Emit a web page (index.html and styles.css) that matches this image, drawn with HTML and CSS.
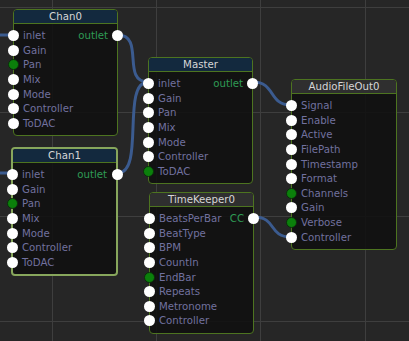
FILE: index.html
```html
<!DOCTYPE html>
<html lang="en">
<head>
    <meta charset="UTF-8">
    <title>Node Editor</title>
    <link rel="stylesheet" href="styles.css">
</head>
<body>

<div class="canvas">
    <!-- grid + links -->
    <svg class="wires" width="409" height="341" viewBox="0 0 409 341">
        <g class="grid">
            <line x1="52.5" y1="0" x2="52.5" y2="341"/>
            <line x1="156.5" y1="0" x2="156.5" y2="341"/>
            <line x1="260.5" y1="0" x2="260.5" y2="341"/>
            <line x1="365.5" y1="0" x2="365.5" y2="341"/>
            <line x1="0" y1="7.5" x2="409" y2="7.5"/>
            <line x1="0" y1="112.5" x2="409" y2="112.5"/>
            <line x1="0" y1="216.5" x2="409" y2="216.5"/>
            <line x1="0" y1="321.5" x2="409" y2="321.5"/>
        </g>
        <g class="links">
            <path d="M -10 35 L 13 35"/>
            <path d="M -10 173 L 11 173"/>
            <path d="M 118 35 C 145 35, 121 82, 148 82"/>
            <path d="M 118 173 C 145 173, 121 82, 148 82"/>
            <path d="M 253 82 C 276 82, 268 105, 291 105"/>
            <path d="M 254 217 C 277 217, 268 237, 291 237"/>
        </g>
    </svg>

    <div class="node" style="left:13px; top:9px; width:105px;">
        <div class="node-title blue">Chan0</div>
        <div class="node-body">
            <div class="row"><span class="pin in"></span>inlet<span class="out-label">outlet</span><span class="pin out"></span></div>
            <div class="row"><span class="pin in"></span>Gain</div>
            <div class="row"><span class="pin in on"></span>Pan</div>
            <div class="row"><span class="pin in"></span>Mix</div>
            <div class="row"><span class="pin in"></span>Mode</div>
            <div class="row"><span class="pin in"></span>Controller</div>
            <div class="row"><span class="pin in"></span>ToDAC</div>
        </div>
    </div>

    <div class="node selected" style="left:11px; top:147px; width:107px;">
        <div class="node-title blue">Chan1</div>
        <div class="node-body">
            <div class="row"><span class="pin in"></span>inlet<span class="out-label">outlet</span><span class="pin out"></span></div>
            <div class="row"><span class="pin in"></span>Gain</div>
            <div class="row"><span class="pin in on"></span>Pan</div>
            <div class="row"><span class="pin in"></span>Mix</div>
            <div class="row"><span class="pin in"></span>Mode</div>
            <div class="row"><span class="pin in"></span>Controller</div>
            <div class="row"><span class="pin in"></span>ToDAC</div>
        </div>
    </div>

    <div class="node" style="left:148px; top:57px; width:105px;">
        <div class="node-title blue">Master</div>
        <div class="node-body">
            <div class="row"><span class="pin in"></span>inlet<span class="out-label">outlet</span><span class="pin out"></span></div>
            <div class="row"><span class="pin in"></span>Gain</div>
            <div class="row"><span class="pin in"></span>Pan</div>
            <div class="row"><span class="pin in"></span>Mix</div>
            <div class="row"><span class="pin in"></span>Mode</div>
            <div class="row"><span class="pin in"></span>Controller</div>
            <div class="row"><span class="pin in on"></span>ToDAC</div>
        </div>
    </div>

    <div class="node" style="left:149px; top:192px; width:105px;">
        <div class="node-title grey">TimeKeeper0</div>
        <div class="node-body">
            <div class="row"><span class="pin in"></span>BeatsPerBar<span class="out-label">CC</span><span class="pin out"></span></div>
            <div class="row"><span class="pin in"></span>BeatType</div>
            <div class="row"><span class="pin in"></span>BPM</div>
            <div class="row"><span class="pin in"></span>CountIn</div>
            <div class="row"><span class="pin in on"></span>EndBar</div>
            <div class="row"><span class="pin in"></span>Repeats</div>
            <div class="row"><span class="pin in"></span>Metronome</div>
            <div class="row"><span class="pin in"></span>Controller</div>
        </div>
    </div>

    <div class="node" style="left:291px; top:79px; width:106px;">
        <div class="node-title grey">AudioFileOut0</div>
        <div class="node-body">
            <div class="row"><span class="pin in"></span>Signal</div>
            <div class="row"><span class="pin in"></span>Enable</div>
            <div class="row"><span class="pin in"></span>Active</div>
            <div class="row"><span class="pin in"></span>FilePath</div>
            <div class="row"><span class="pin in"></span>Timestamp</div>
            <div class="row"><span class="pin in"></span>Format</div>
            <div class="row"><span class="pin in on"></span>Channels</div>
            <div class="row"><span class="pin in"></span>Gain</div>
            <div class="row"><span class="pin in on"></span>Verbose</div>
            <div class="row"><span class="pin in"></span>Controller</div>
        </div>
    </div>
</div>

</body>
</html>
```

FILE: styles.css
```css
body {
    margin: 0;
    padding: 0;
    background-color: #262626;
    font-family: "DejaVu Sans", Verdana, sans-serif;
    font-size: 10.2px;
}
.canvas {
    position: relative;
    width: 409px;
    height: 341px;
    overflow: hidden;
}
.wires {
    position: absolute;
    left: 0;
    top: 0;
}
.grid line {
    stroke: #3e3e3e;
    stroke-width: 1;
}
.links path {
    fill: none;
    stroke: #3b5b8f;
    stroke-width: 3;
}
.node {
    position: absolute;
    box-sizing: border-box;
    border: 1px solid #4d7420;
    border-radius: 4px;
    background-color: rgba(16, 16, 16, 0.88);
}
.node.selected {
    border: 2px solid #87a65c;
}
.node-title {
    height: 13px;
    line-height: 13px;
    text-align: center;
    color: #d6d6d6;
    border-bottom: 1px solid #4d7420;
    border-radius: 3px 3px 0 0;
}
.node-title.blue {
    background-color: #13293e;
}
.node-title.grey {
    background-color: #2f2f2f;
}
.node-body {
    padding: 4.5px 0 4.5px 0;
}
.row {
    position: relative;
    display: flex;
    align-items: center;
    height: 14.6px;
    padding-left: 9px;
    color: #71719f;
    white-space: nowrap;
}
.out-label {
    margin-left: auto;
    padding-right: 9px;
    color: #2f9a55;
}
.pin {
    position: absolute;
    top: 50%;
    width: 11px;
    height: 11px;
    margin-top: -5.5px;
    border-radius: 50%;
    background-color: #fff;
    box-sizing: border-box;
}
.pin.in {
    left: -6px;
}
.node.selected .pin.in {
    left: -6.5px;
}
.pin.out {
    right: -6px;
}
.node.selected .pin.out {
    right: -6.5px;
}
.pin.on {
    background-color: #0b800b;
    border: 1px solid #0b2e0b;
}
```
